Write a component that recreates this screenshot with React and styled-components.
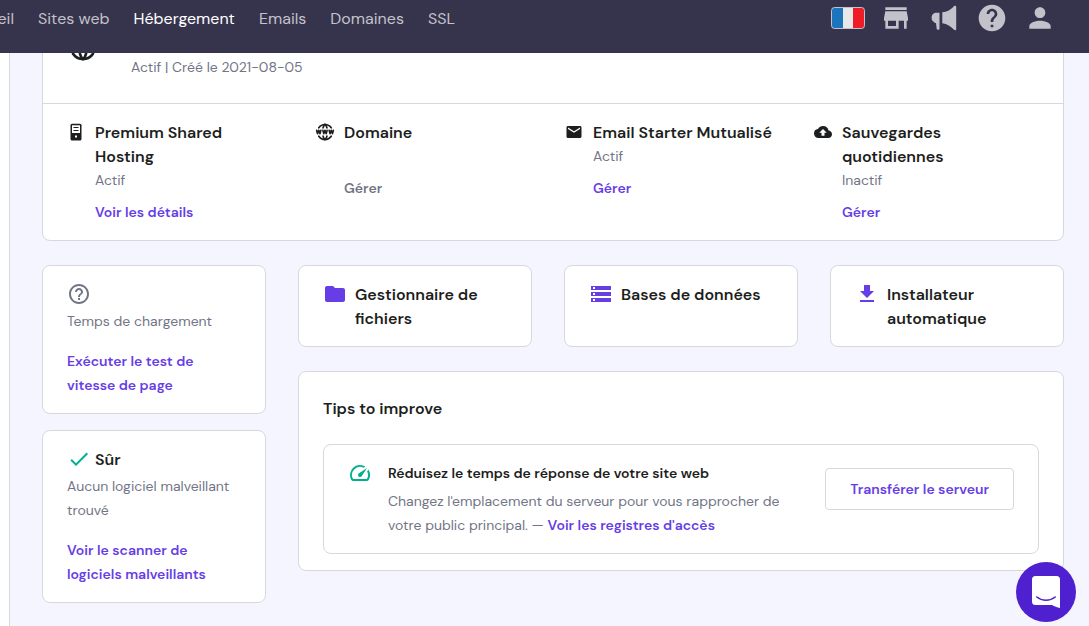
import React from "react";
import styled, { createGlobalStyle } from "styled-components";
import {
  MdHelp,
  MdPerson,
  MdHelpOutline,
  MdFolder,
  MdStorage,
  MdCheck,
  MdMail,
  MdBackup,
} from "react-icons/md";
import { TbWorldWww } from "react-icons/tb";

const color = {
  header: "#36344d",
  muted: "#c3c2ca",
  page: "#f4f5ff",
  border: "#d8d8dc",
  text: "#1d1e20",
  gray: "#727586",
  primary: "#673de6",
  success: "#00b090",
  chat: "#4f20d0",
};

const GlobalStyle = createGlobalStyle`
  *, *::before, *::after { box-sizing: border-box; }
  body {
    margin: 0;
    background: #fff;
    color: ${color.text};
    font-family: "DM Sans", Inter, "Liberation Sans", sans-serif;
    font-size: 14px;
    line-height: 24px;
    overflow: hidden;
  }
  h2, h3, h4, p { margin: 0; }
  svg { display: block; flex: none; }
`;

/* ---------- header ---------- */

const Header = styled.header`
  position: fixed;
  inset: 0 0 auto 0;
  z-index: 2;
  height: 53px;
  padding: 0 33px 17px 0;
  display: flex;
  align-items: center;
  justify-content: space-between;
  background: ${color.header};
`;

const Nav = styled.nav`
  display: flex;
  gap: 24px;
  padding-top: 2px;
`;

const NavLink = styled.a`
  color: ${({ $active }) => ($active ? "#fff" : color.muted)};
  font-size: 16px;
  font-weight: 400;
  text-decoration: none;
  white-space: nowrap;
`;

const ClippedItem = styled.span`
  display: flex;
  justify-content: flex-end;
  width: 14px;
  overflow: hidden;
`;

const Actions = styled.div`
  display: flex;
  align-items: center;
  gap: 16px;
`;

const IconButton = styled.button`
  display: flex;
  align-items: center;
  justify-content: center;
  width: 32px;
  height: 32px;
  padding: 0;
  border: 0;
  background: none;
  color: ${color.muted};
`;

/* ---------- page ---------- */

const Page = styled.main`
  min-height: 100vh;
  margin-left: 9px;
  padding: 6px 25px 24px 32px;
  border-left: 1px solid ${color.border};
  background: ${color.page};
  display: flex;
  flex-direction: column;
  gap: 24px;
`;

const Card = styled.section`
  border: 1px solid ${color.border};
  border-radius: 8px;
  background: #fff;
`;

const SiteSummary = styled.div`
  display: flex;
  align-items: flex-start;
  gap: 32px;
  padding: 24px;
  border-bottom: 1px solid ${color.border};
`;

const Muted = styled.p`
  min-height: 24px;
  color: ${color.gray};
`;

const SiteMeta = styled(Muted)`
  padding-top: 24px;
`;

const TextLink = styled.a`
  color: ${({ $disabled }) => ($disabled ? color.gray : color.primary)};
  font-weight: 600;
  text-decoration: none;
`;

const Title = styled.h3`
  margin-bottom: -1px;
  padding-top: 1px;
  font-size: 16px;
  line-height: 24px;
  font-weight: 600;
`;

const Services = styled.div`
  display: grid;
  grid-template-columns: repeat(4, 1fr);
  padding: 16px 12px;
`;

const Service = styled.article`
  display: flex;
  gap: 10px;
  padding: 0 24px 0 12px;
`;

const ServiceIcon = styled.span`
  display: flex;
  align-items: center;
  justify-content: center;
  flex: none;
  width: 18px;
  height: 24px;
`;

const ServiceBody = styled.div`
  min-width: 0;
  ${Muted} { margin-bottom: 8px; }
`;

const Columns = styled.div`
  display: grid;
  grid-template-columns: 224px 1fr;
  align-items: start;
  gap: 32px;
`;

const Stack = styled.div`
  display: flex;
  flex-direction: column;
  gap: ${({ $gap }) => $gap}px;
`;

const StatusCard = styled(Card)`
  padding: 16px 24px;
  ${Muted} { margin: 3px 0 16px; }
  ${TextLink} { display: block; }
`;

const StatusHead = styled.div`
  display: flex;
  align-items: center;
  gap: 4px;
  height: 24px;
  color: ${({ $tone }) => $tone};
  ${Title} { color: ${color.text}; }
`;

const Shortcuts = styled.div`
  display: grid;
  grid-template-columns: repeat(3, 1fr);
  gap: 32px;
`;

const Shortcut = styled.a`
  display: flex;
  gap: 8px;
  padding: 16px 24px;
  border: 1px solid ${color.border};
  border-radius: 8px;
  background: #fff;
  color: ${color.text};
  text-decoration: none;
  svg { color: ${color.primary}; }
`;

const Tips = styled(Card)`
  padding: 24px 24px 16px;
`;

const Tip = styled.article`
  display: flex;
  align-items: flex-start;
  gap: 16px;
  margin-top: 24px;
  padding: 16px 24px;
  border: 1px solid ${color.border};
  border-radius: 8px;
  > svg { color: ${color.success}; }
`;

const TipBody = styled.div`
  flex: 1;
  padding-right: 8px;
  ${Muted} { margin-top: 4px; }
`;

const TipTitle = styled.h4`
  font-size: 14px;
  line-height: 24px;
  font-weight: 600;
`;

const OutlineButton = styled.button`
  flex: none;
  height: 42px;
  margin-top: 7px;
  padding: 0 24px;
  border: 1px solid ${color.border};
  border-radius: 4px;
  background: #fff;
  color: ${color.primary};
  font: inherit;
  font-weight: 600;
`;

const ChatButton = styled.button`
  position: fixed;
  right: 13px;
  bottom: 4px;
  z-index: 3;
  display: flex;
  align-items: center;
  justify-content: center;
  width: 60px;
  height: 60px;
  padding: 0;
  border: 0;
  border-radius: 50%;
  background: ${color.chat};
`;

/* ---------- drawings ---------- */

const FrenchFlag = () => (
  <svg width="34" height="22" viewBox="0 0 34 22" aria-hidden="true">
    <clipPath id="flag">
      <rect x="0.5" y="0.5" width="33" height="21" rx="3" />
    </clipPath>
    <g clipPath="url(#flag)">
      <rect width="12" height="22" fill="#1c75bc" />
      <rect x="12" width="10" height="22" fill="#e8e8ea" />
      <rect x="22" width="12" height="22" fill="#ee1c25" />
    </g>
    <rect x="0.5" y="0.5" width="33" height="21" rx="3" fill="none" stroke="#c3c2ca" />
  </svg>
);

const StoreIcon = () => (
  <svg width="32" height="32" viewBox="0 0 24 24" fill="currentColor" aria-hidden="true">
    <path d="M20 4H4v2h16V4zm1 10v-2l-1-5H4l-1 5v2h1v6h10v-6h4v6h2v-6h1zm-9 4H6v-4h6v4z" />
  </svg>
);

const Megaphone = () => (
  <svg width="26" height="26" viewBox="0 0 26 26" fill="currentColor" aria-hidden="true">
    <path d="M8.500 7.700V24c0 1.100-2.600 1.100-2.800 0L5 18H3.600L3.300 17C1.600 16.500.6 15 .6 12.800.6 9.600 2.800 7.700 5.600 7.700z" />
    <path d="M11.300 7.300C16 7 20 4.500 23 1.200c1-.8 2.200-.4 2.200.8v22c0 1.200-1.200 1.600-2.200.8-3-3.300-7-6-11.700-6.500z" />
  </svg>
);

const ServerIcon = () => (
  <svg width="18" height="18" viewBox="0 0 18 18" aria-hidden="true">
    <rect x="3.500" y="0.800" width="11" height="16.700" rx="1.500" fill={color.text} />
    <rect x="5" y="2.300" width="8" height="7.700" fill="#fff" />
    <path d="M6.500 4.500h5M6.500 7.500h5" stroke={color.text} strokeWidth="1" />
    <rect x="8" y="12.500" width="2" height="2" fill="#fff" />
  </svg>
);

const DownloadIcon = () => (
  <svg width="24" height="24" viewBox="0 0 24 24" fill="currentColor" aria-hidden="true">
    <path d="M19 9h-4V3H9v6H5l7 7 7-7zM5 18v2h14v-2H5z" />
  </svg>
);

const SpeedIcon = () => (
  <svg width="24" height="24" viewBox="0 0 24 24" fill="currentColor" aria-hidden="true">
    <path d="M20.380 8.570l-1.230 1.850a8 8 0 0 1-.22 7.580H5.070A8 8 0 0 1 15.580 6.850l1.850-1.230A10 10 0 0 0 3.350 19a2 2 0 0 0 1.720 1h13.850a2 2 0 0 0 1.740-1 10 10 0 0 0-.27-10.440z" />
    <path d="M10.590 15.410a2 2 0 0 0 2.830 0l5.660-8.490-8.490 5.660a2 2 0 0 0 0 2.830z" />
  </svg>
);

const ChatIcon = () => (
  <svg width="28" height="32" viewBox="0 0 28 32" aria-hidden="true">
    <path d="M3.500 0h21A3.500 3.500 0 0 1 28 3.500V32c-3-.5-5.500-1.600-8-3H3.500A3.500 3.500 0 0 1 0 25.500v-22A3.500 3.500 0 0 1 3.500 0z" fill="#fff" />
    <path d="M4.800 21c5.500 4.400 12.900 4.400 18.400 0" fill="none" stroke={color.chat} strokeWidth="1.600" strokeLinecap="round" />
  </svg>
);

const GlobeIcon = styled(TbWorldWww)`
  stroke-width: 2;
`;

/* ---------- data ---------- */

const navItems = ["Sites web", "Hébergement", "Emails", "Domaines", "SSL"];

const services = [
  { title: "Premium Shared Hosting", status: "Actif", link: "Voir les détails", icon: <ServerIcon /> },
  { title: "Domaine", status: "", link: "Gérer", disabled: true, icon: <GlobeIcon size={20} /> },
  { title: "Email Starter Mutualisé", status: "Actif", link: "Gérer", icon: <MdMail size={18} /> },
  { title: "Sauvegardes quotidiennes", status: "Inactif", link: "Gérer", icon: <MdBackup size={18} /> },
];

const shortcuts = [
  { title: "Gestionnaire de fichiers", icon: <MdFolder size={24} /> },
  { title: "Bases de données", icon: <MdStorage size={24} /> },
  { title: "Installateur automatique", icon: <DownloadIcon /> },
];

export default function App() {
  return (
    <>
      <GlobalStyle />
      <Header>
        <Nav>
          <ClippedItem>
            <NavLink href="#accueil" aria-label="Accueil">eil</NavLink>
          </ClippedItem>
          {navItems.map((item) => (
            <NavLink key={item} href="#nav" $active={item === "Hébergement"}>
              {item}
            </NavLink>
          ))}
        </Nav>
        <Actions>
          <IconButton aria-label="Français"><FrenchFlag /></IconButton>
          <IconButton aria-label="Boutique"><StoreIcon /></IconButton>
          <IconButton aria-label="Annonces"><Megaphone /></IconButton>
          <IconButton aria-label="Aide"><MdHelp size={32} /></IconButton>
          <IconButton aria-label="Compte"><MdPerson size={32} /></IconButton>
        </Actions>
      </Header>

      <Page>
        <Card>
          <SiteSummary>
            <GlobeIcon size={32} />
            <SiteMeta>Actif | Créé le 2021-08-05</SiteMeta>
          </SiteSummary>
          <Services>
            {services.map((s) => (
              <Service key={s.title}>
                <ServiceIcon>{s.icon}</ServiceIcon>
                <ServiceBody>
                  <Title>{s.title}</Title>
                  <Muted>{s.status}</Muted>
                  <TextLink href="#service" $disabled={s.disabled}>{s.link}</TextLink>
                </ServiceBody>
              </Service>
            ))}
          </Services>
        </Card>

        <Columns>
          <Stack $gap={16}>
            <StatusCard>
              <StatusHead $tone={color.gray}><MdHelpOutline size={24} /></StatusHead>
              <Muted>Temps de chargement</Muted>
              <TextLink href="#vitesse">Exécuter le test de vitesse de page</TextLink>
            </StatusCard>
            <StatusCard>
              <StatusHead $tone={color.success}>
                <MdCheck size={24} />
                <Title>Sûr</Title>
              </StatusHead>
              <Muted>Aucun logiciel malveillant trouvé</Muted>
              <TextLink href="#scanner">Voir le scanner de logiciels malveillants</TextLink>
            </StatusCard>
          </Stack>

          <Stack $gap={24}>
            <Shortcuts>
              {shortcuts.map((s) => (
                <Shortcut key={s.title} href="#outil">
                  {s.icon}
                  <Title>{s.title}</Title>
                </Shortcut>
              ))}
            </Shortcuts>
            <Tips>
              <Title as="h2">Tips to improve</Title>
              <Tip>
                <SpeedIcon />
                <TipBody>
                  <TipTitle>Réduisez le temps de réponse de votre site web</TipTitle>
                  <Muted>
                    Changez l'emplacement du serveur pour vous rapprocher de votre public principal. —{" "}
                    <TextLink href="#registres">Voir les registres d'accès</TextLink>
                  </Muted>
                </TipBody>
                <OutlineButton>Transférer le serveur</OutlineButton>
              </Tip>
            </Tips>
          </Stack>
        </Columns>
      </Page>

      <ChatButton aria-label="Ouvrir la messagerie"><ChatIcon /></ChatButton>
    </>
  );
}
